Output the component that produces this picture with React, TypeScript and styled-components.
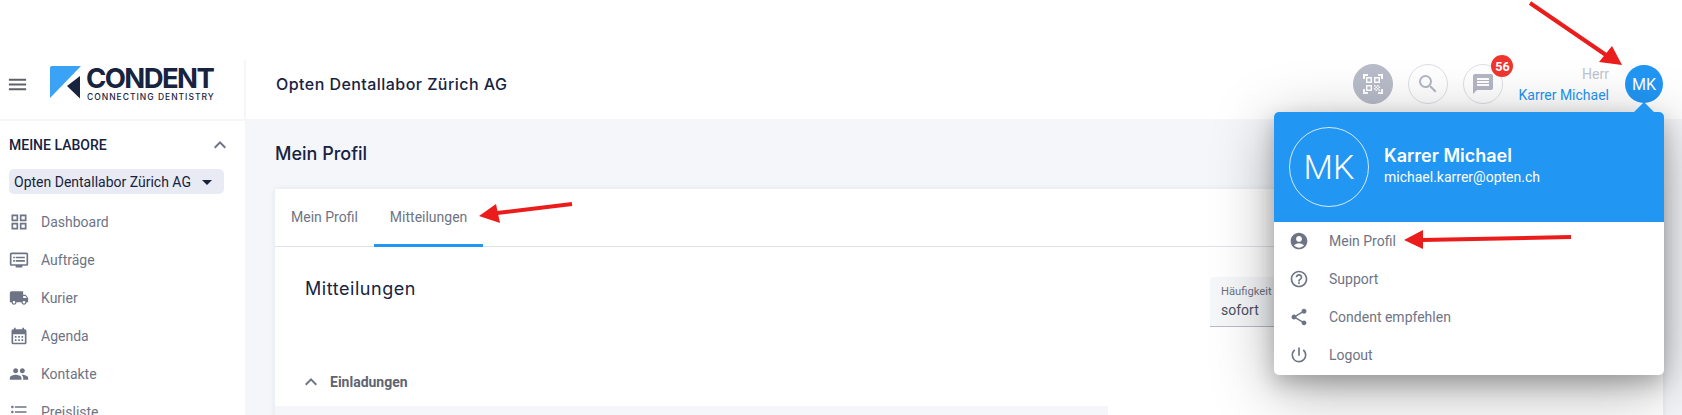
import styled, { createGlobalStyle } from 'styled-components';
import {
	MdAccountCircle,
	MdArrowDropDown,
	MdCalendarMonth,
	MdExpandLess,
	MdFormatListBulleted,
	MdLocalShipping,
	MdMenu,
	MdMessage,
	MdOutlineDvr,
	MdOutlineGridView,
	MdOutlineHelpOutline,
	MdPeople,
	MdPowerSettingsNew,
	MdQrCodeScanner,
	MdSearch,
	MdShare
} from 'react-icons/md';
import type { IconType } from 'react-icons';

type NavEntry = {
	label: string;
	icon: IconType;
};

const navEntries: NavEntry[] = [
	{ label: 'Dashboard', icon: MdOutlineGridView },
	{ label: 'Aufträge', icon: MdOutlineDvr },
	{ label: 'Kurier', icon: MdLocalShipping },
	{ label: 'Agenda', icon: MdCalendarMonth },
	{ label: 'Kontakte', icon: MdPeople },
	{ label: 'Preisliste', icon: MdFormatListBulleted }
];

const menuEntries: NavEntry[] = [
	{ label: 'Mein Profil', icon: MdAccountCircle },
	{ label: 'Support', icon: MdOutlineHelpOutline },
	{ label: 'Condent empfehlen', icon: MdShare },
	{ label: 'Logout', icon: MdPowerSettingsNew }
];

const GlobalStyle = createGlobalStyle`
	html, body {
		margin: 0;
		padding: 0;
		background: #fff;
		font-family: Roboto, "Liberation Sans", sans-serif;
	}

	* {
		box-sizing: border-box;
	}
`;

const Page = styled.div`
	position: relative;
	width: 1682px;
	height: 415px;
	padding-top: 60px;
	overflow: hidden;
	background: #fff;
`;

const Header = styled.header`
	display: flex;
	align-items: center;
	height: 61px;
	border-bottom: 2px solid #f4f6fa;
`;

const BrandCell = styled.div`
	display: flex;
	align-items: center;
	width: 246px;
	height: 59px;
	padding: 0 0 11px 6px;
	border-right: 2px solid #f4f6fa;
	color: #5f6368;
	font-size: 23px;
`;

const Logo = styled.div`
	display: flex;
	gap: 5px;
	margin-left: 21px;
`;

const LogoText = styled.div`
	display: flex;
	flex-direction: column;
	color: #17233f;
`;

const LogoName = styled.span`
	font-family: Inter, sans-serif;
	font-size: 27.5px;
	font-weight: 700;
	line-height: 24px;
	letter-spacing: -1.6px;
`;

const LogoClaim = styled.span`
	margin-top: 3px;
	padding-left: 1px;
	font-family: Inter, sans-serif;
	font-size: 8.5px;
	font-weight: 500;
	line-height: 9px;
	letter-spacing: 1px;
	white-space: nowrap;
`;

const HeaderTitle = styled.div`
	margin: 0 0 11px 30px;
	color: #17233f;
	font-family: Inter, sans-serif;
	font-size: 16px;
	font-weight: 500;
	letter-spacing: 0.45px;
`;

const HeaderActions = styled.div`
	display: flex;
	align-items: center;
	gap: 15px;
	margin: 0 0 11px auto;
	padding-right: 19px;
`;

const RoundButton = styled.div<{ $filled?: boolean }>`
	position: relative;
	display: flex;
	align-items: center;
	justify-content: center;
	width: 40px;
	height: 40px;
	border-radius: 50%;
	border: 1px solid ${(props) => (props.$filled ? '#b8bcc9' : '#dcdfe7')};
	background: ${(props) => (props.$filled ? '#b8bcc9' : '#fff')};
	color: ${(props) => (props.$filled ? '#fff' : '#b3b7c5')};
	font-size: 24px;
`;

const Badge = styled.span`
	position: absolute;
	top: -10px;
	right: -11px;
	display: flex;
	align-items: center;
	justify-content: center;
	width: 22px;
	height: 22px;
	border-radius: 50%;
	background: #f0352f;
	color: #fff;
	font-size: 12.5px;
	font-weight: 700;
`;

const UserName = styled.div`
	display: flex;
	flex-direction: column;
	align-items: flex-end;
	gap: 3px;
	margin-right: 1px;
	font-size: 14px;
	line-height: 18px;
`;

const Salutation = styled.span`
	color: #c0c4d0;
`;

const FullName = styled.span`
	color: #2196f3;
`;

const UserAvatar = styled.div`
	display: flex;
	align-items: center;
	justify-content: center;
	width: 38px;
	height: 38px;
	border-radius: 50%;
	background: #2196f3;
	color: #fff;
	font-size: 16px;
`;

const Body = styled.div`
	display: flex;
	height: 294px;
`;

const Sidebar = styled.aside`
	flex: 0 0 245px;
	padding: 14px 0 0 9px;
	overflow: hidden;
`;

const SidebarHead = styled.div`
	display: flex;
	align-items: center;
	justify-content: space-between;
	width: 223px;
	height: 20px;
	color: #17233f;
	font-size: 14px;
	font-weight: 500;

	svg {
		color: #6e7485;
		font-size: 24px;
	}
`;

const LabSelect = styled.div`
	display: flex;
	align-items: center;
	justify-content: space-between;
	width: 215px;
	height: 25px;
	margin-top: 14px;
	padding: 0 5px;
	border-radius: 5px;
	background: #e8ebf3;
	color: #17233f;
	font-size: 14px;

	svg {
		font-size: 24px;
	}
`;

const NavList = styled.nav`
	margin-top: 9px;
`;

const NavItem = styled.div`
	display: flex;
	align-items: center;
	gap: 12px;
	height: 38px;
	color: #6e7485;
	font-size: 14px;

	svg {
		flex: 0 0 20px;
		font-size: 20px;
	}
`;

const Main = styled.main`
	flex: 1;
	min-width: 0;
	padding: 20px 19px 0 30px;
	background: #f4f6fa;
`;

const PageTitle = styled.h1`
	margin: 0 0 22px;
	color: #17233f;
	font-family: Inter, sans-serif;
	font-size: 18px;
	font-weight: 500;
	line-height: 26px;
`;

const Card = styled.section`
	height: 300px;
	background: #fff;
	box-shadow: 0 0 6px rgba(23, 35, 63, 0.08);
`;

const Tabs = styled.div`
	display: flex;
	height: 58px;
	border-bottom: 1px solid #e0e2ea;
`;

const Tab = styled.div<{ $active?: boolean }>`
	display: flex;
	align-items: center;
	height: 58px;
	padding: 0 16px;
	border-bottom: 3px solid ${(props) => (props.$active ? '#2196f3' : 'transparent')};
	color: #6e7485;
	font-size: 14px;
`;

const CardBody = styled.div`
	padding-top: 30px;
`;

const TitleRow = styled.div`
	display: flex;
	justify-content: space-between;
	height: 50px;
	padding-left: 30px;
`;

const SectionTitle = styled.h2`
	margin: 0;
	color: #17233f;
	font-family: Inter, sans-serif;
	font-size: 18px;
	font-weight: 400;
	line-height: 24px;
	letter-spacing: 0.55px;
`;

const FrequencyField = styled.div`
	width: 453px;
	height: 50px;
	padding: 7px 11px 0;
	border-bottom: 1px solid #b9bcc8;
	border-radius: 4px 4px 0 0;
	background: #f6f7f9;
`;

const FieldLabel = styled.div`
	color: #6e7485;
	font-size: 11.2px;
	line-height: 16px;
`;

const FieldValue = styled.div`
	color: #4a5060;
	font-size: 14px;
	line-height: 20px;
`;

const GroupHead = styled.div`
	display: flex;
	align-items: center;
	gap: 7px;
	height: 24px;
	margin-top: 43px;
	padding-left: 24px;
	color: #5f6472;
	font-size: 14px;
	font-weight: 700;

	svg {
		color: #6e7485;
		font-size: 24px;
	}
`;

const TableHead = styled.div`
	width: 833px;
	height: 30px;
	margin-top: 12px;
	background: #f4f6fa;
`;

const ProfileMenu = styled.div`
	position: absolute;
	top: 112px;
	left: 1274px;
	width: 390px;
	height: 263px;
	border-radius: 5px;
	background: #fff;
	box-shadow: 0 14px 60px rgba(0, 0, 0, 0.34), 0 8px 20px rgba(0, 0, 0, 0.2);

	&::before {
		content: '';
		position: absolute;
		top: -7px;
		right: 13px;
		width: 14px;
		height: 14px;
		background: #2196f3;
		transform: rotate(45deg);
	}
`;

const MenuHead = styled.div`
	position: relative;
	display: flex;
	align-items: center;
	gap: 15px;
	height: 110px;
	padding-left: 15px;
	border-radius: 5px 5px 0 0;
	background: #2196f3;
	color: #fff;
`;

const MenuAvatar = styled.div`
	display: flex;
	align-items: center;
	justify-content: center;
	width: 80px;
	height: 80px;
	border: 1px solid rgba(255, 255, 255, 0.8);
	border-radius: 50%;
	font-size: 34px;
	font-weight: 300;
`;

const MenuName = styled.div`
	font-family: Inter, sans-serif;
	font-size: 18px;
	font-weight: 600;
	line-height: 22px;
`;

const MenuMail = styled.div`
	margin: 1px 0 3px;
	font-size: 14px;
	line-height: 18px;
`;

const MenuItem = styled.div`
	display: flex;
	align-items: center;
	gap: 20px;
	height: 38px;
	padding-left: 15px;
	color: #6e7485;
	font-size: 14px;

	svg {
		flex: 0 0 20px;
		font-size: 20px;
	}
`;

const Annotations = styled.svg`
	position: absolute;
	top: 0;
	left: 0;
	pointer-events: none;
`;

const Arrow = ({ tail, neck, head }: { tail: string; neck: string; head: string }) => (
	<g>
		<polyline points={`${tail} ${neck}`} stroke="#ea1c1c" strokeWidth="4" fill="none" />
		<polygon points={head} fill="#ea1c1c" />
	</g>
);

const App = () => {
	return (
		<Page>
			<GlobalStyle />
			<Header>
				<BrandCell>
					<MdMenu />
					<Logo>
						<svg width="31" height="33" viewBox="0 0 31 33">
							<path d="M2 0H31L0 32V2a2 2 0 0 1 2-2Z" fill="#3aa3f5" />
							<path d="M30 10V32.5L17 20Z" fill="#17233f" />
						</svg>
						<LogoText>
							<LogoName>CONDENT</LogoName>
							<LogoClaim>CONNECTING DENTISTRY</LogoClaim>
						</LogoText>
					</Logo>
				</BrandCell>
				<HeaderTitle>Opten Dentallabor Zürich AG</HeaderTitle>
				<HeaderActions>
					<RoundButton $filled>
						<MdQrCodeScanner />
					</RoundButton>
					<RoundButton>
						<MdSearch />
					</RoundButton>
					<RoundButton>
						<MdMessage />
						<Badge>56</Badge>
					</RoundButton>
					<UserName>
						<Salutation>Herr</Salutation>
						<FullName>Karrer Michael</FullName>
					</UserName>
					<UserAvatar>MK</UserAvatar>
				</HeaderActions>
			</Header>
			<Body>
				<Sidebar>
					<SidebarHead>
						MEINE LABORE
						<MdExpandLess />
					</SidebarHead>
					<LabSelect>
						Opten Dentallabor Zürich AG
						<MdArrowDropDown />
					</LabSelect>
					<NavList>
						{navEntries.map((entry) => (
							<NavItem key={entry.label}>
								<entry.icon />
								{entry.label}
							</NavItem>
						))}
					</NavList>
				</Sidebar>
				<Main>
					<PageTitle>Mein Profil</PageTitle>
					<Card>
						<Tabs>
							<Tab>Mein Profil</Tab>
							<Tab $active>Mitteilungen</Tab>
						</Tabs>
						<CardBody>
							<TitleRow>
								<SectionTitle>Mitteilungen</SectionTitle>
								<FrequencyField>
									<FieldLabel>Häufigkeit der Mitteilungen</FieldLabel>
									<FieldValue>sofort</FieldValue>
								</FrequencyField>
							</TitleRow>
							<GroupHead>
								<MdExpandLess />
								Einladungen
							</GroupHead>
							<TableHead />
						</CardBody>
					</Card>
				</Main>
			</Body>
			<ProfileMenu>
				<MenuHead>
					<MenuAvatar>MK</MenuAvatar>
					<div>
						<MenuName>Karrer Michael</MenuName>
						<MenuMail>michael.karrer@opten.ch</MenuMail>
					</div>
				</MenuHead>
				<div>
					{menuEntries.map((entry) => (
						<MenuItem key={entry.label}>
							<entry.icon />
							{entry.label}
						</MenuItem>
					))}
				</div>
			</ProfileMenu>
			<Annotations width="1682" height="415" viewBox="0 0 1682 415">
				<Arrow tail="1530,3" neck="1606,55" head="1622,65 1599,62 1612,46" />
				<Arrow tail="572,204" neck="497,213" head="479,216 496,204 500,223" />
				<Arrow tail="1571,237" neck="1422,240" head="1404,240 1423,230 1423,249" />
			</Annotations>
		</Page>
	);
};

export default App;
